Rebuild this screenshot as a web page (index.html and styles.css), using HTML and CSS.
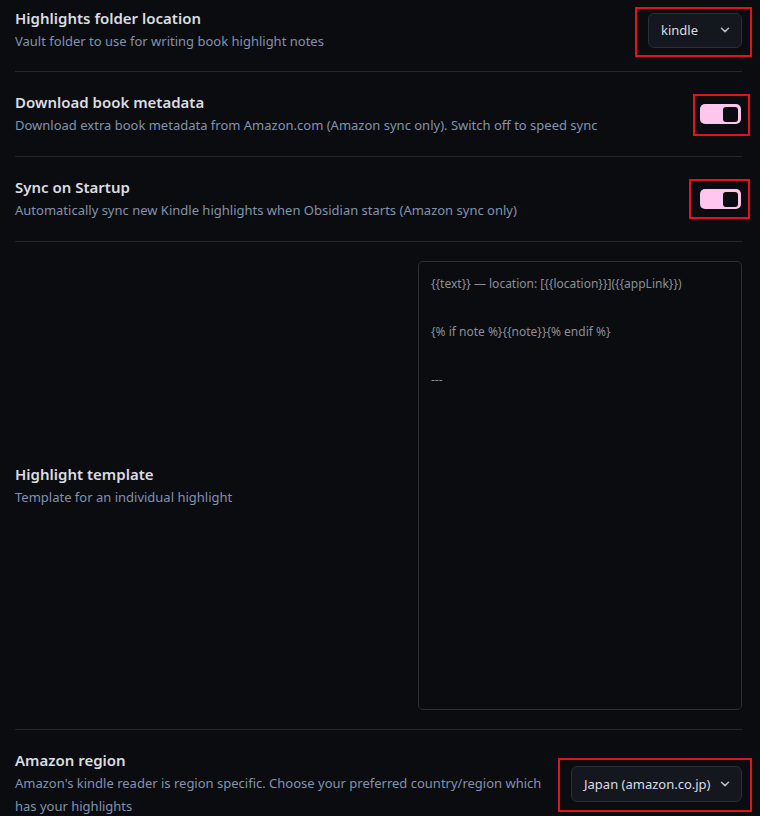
FILE: index.html
```html
<!DOCTYPE html>
<html>
<head>
<meta charset="utf-8">
<link rel="stylesheet" href="styles.css">
</head>
<body>
<div class="settings">
  <div class="item first">
    <div class="info">
      <div class="name">Highlights folder location</div>
      <div class="desc">Vault folder to use for writing book highlight notes</div>
    </div>
    <div class="control">
      <div class="select sel-folder mark">
        <span>kindle</span>
        <svg class="chev" width="10" height="6" viewBox="0 0 10 6"><path d="M1.5 1.2 L5 4.6 L8.5 1.2" fill="none" stroke="#b8bcc4" stroke-width="1.5" stroke-linecap="round" stroke-linejoin="round"/></svg>
      </div>
    </div>
  </div>
  <div class="item">
    <div class="info">
      <div class="name">Download book metadata</div>
      <div class="desc">Download extra book metadata from Amazon.com (Amazon sync only). Switch off to speed sync</div>
    </div>
    <div class="control">
      <div class="toggle mark mark-t1"><span class="knob"></span></div>
    </div>
  </div>
  <div class="item">
    <div class="info">
      <div class="name">Sync on Startup</div>
      <div class="desc">Automatically sync new Kindle highlights when Obsidian starts (Amazon sync only)</div>
    </div>
    <div class="control">
      <div class="toggle mark mark-t2"><span class="knob"></span></div>
    </div>
  </div>
  <div class="item">
    <div class="info">
      <div class="name">Highlight template</div>
      <div class="desc">Template for an individual highlight</div>
    </div>
    <div class="control">
      <textarea class="template" spellcheck="false">{{text}} — location: [{{location}}]({{appLink}})

{% if note %}{{note}}{% endif %}

---</textarea>
    </div>
  </div>
  <div class="item">
    <div class="info">
      <div class="name">Amazon region</div>
      <div class="desc">Amazon's kindle reader is region specific. Choose your preferred country/region which has your highlights</div>
    </div>
    <div class="control">
      <div class="select sel-region mark mark-r">
        <span>Japan (amazon.co.jp)</span>
        <svg class="chev" width="10" height="6" viewBox="0 0 10 6"><path d="M1.5 1.2 L5 4.6 L8.5 1.2" fill="none" stroke="#b8bcc4" stroke-width="1.5" stroke-linecap="round" stroke-linejoin="round"/></svg>
      </div>
    </div>
  </div>
</div>
</body>
</html>
```
FILE: styles.css
```css
html, body {
  margin: 0;
  padding: 0;
  background: #0a0c10;
  height: 100%;
  overflow: hidden;
}
body {
  font-family: "Noto Sans", "Open Sans", sans-serif;
  color: #dadbdd;
}
.settings {
  width: 727px;
  margin-left: 15px;
}
.item {
  display: flex;
  align-items: center;
  gap: 16px;
  padding: 19px 0;
  border-top: 1px solid #22272f;
}
.item.first {
  border-top: none;
  padding: 7px 0 18px;
}
.info {
  flex: 1;
  min-width: 0;
}
.name {
  font-size: 15px;
  font-weight: 600;
  line-height: 22px;
  color: #dcdde0;
}
.desc {
  font-size: 13px;
  line-height: 23px;
  margin-top: 1px;
  color: #8393ad;
}
.control {
  flex: none;
  display: flex;
  align-items: center;
}
.select {
  display: flex;
  align-items: center;
  justify-content: space-between;
  box-sizing: border-box;
  height: 35px;
  padding: 0 11px 0 12px;
  background: #14171d;
  border: 1px solid #2a2f38;
  border-radius: 6px;
  font-size: 13px;
  color: #dcdde0;
  white-space: nowrap;
}
.sel-folder {
  width: 94px;
}
.sel-region {
  width: 171px;
  height: 36px;
}
.chev {
  display: block;
  flex: none;
}
.toggle {
  box-sizing: border-box;
  width: 41px;
  height: 20px;
  background: #ffc6ee;
  border-radius: 5px;
  display: flex;
  align-items: center;
  justify-content: flex-end;
  padding-right: 3px;
  margin-right: 1px;
}
.knob {
  width: 15px;
  height: 15px;
  background: #0a0c10;
  border-radius: 3px;
}
.template {
  display: block;
  box-sizing: border-box;
  width: 324px;
  height: 449px;
  margin: 0;
  padding: 10px 12px;
  background: #0a0c10;
  border: 1px solid #2a2f38;
  border-radius: 5px;
  font-family: "Noto Sans", "Open Sans", sans-serif;
  font-size: 12px;
  line-height: 24px;
  color: #8c9096;
  resize: none;
  outline: none;
}
.mark {
  position: relative;
}
.mark::after {
  content: "";
  position: absolute;
  left: -14px;
  right: -11px;
  top: -7px;
  bottom: -10px;
  border: 2px solid #e3131b;
  pointer-events: none;
}
.mark-t1::after {
  left: -7px;
  right: -9px;
  top: -10px;
  bottom: -12px;
}
.mark-t2::after {
  left: -11px;
  right: -9px;
  top: -10px;
  bottom: -10px;
}
.mark-r::after {
  left: -14px;
  right: -11px;
  top: -9px;
  bottom: -11px;
}
```
